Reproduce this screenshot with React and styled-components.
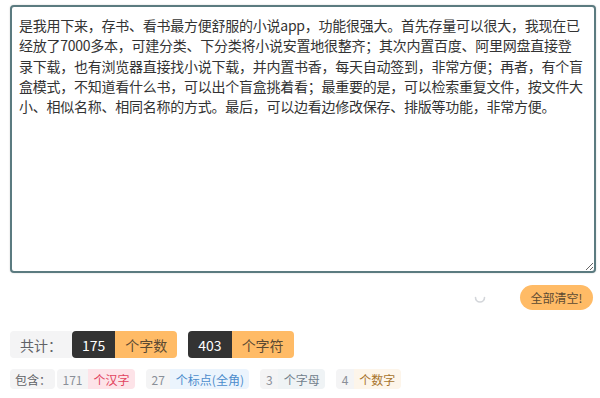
import React from 'react';
import styled, { createGlobalStyle } from 'styled-components';

const GlobalStyle = createGlobalStyle`
  html, body {
    margin: 0;
    padding: 0;
    background: #fff;
  }
  body {
    font-family: "Noto Sans CJK SC", "Noto Sans", sans-serif;
  }
`;

const Page = styled.div`
  width: 600px;
  padding: 5px 4px 0 10px;
  box-sizing: border-box;
`;

const Editor = styled.textarea`
  display: block;
  width: 100%;
  height: 268px;
  box-sizing: border-box;
  padding: 8px 9px 8px 7px;
  border: 2px solid #5b7b80;
  border-radius: 4px;
  box-shadow: 0 0 2px rgba(0, 0, 0, 0.18);
  font-family: "Noto Sans CJK SC", sans-serif;
  font-size: 14px;
  letter-spacing: -0.25px;
  line-height: 20.3px;
  color: #333;
  outline: none;
  resize: both;
`;

const Actions = styled.div`
  display: flex;
  justify-content: flex-end;
  align-items: center;
  margin-top: 12px;
  padding-right: 3px;
`;

const Spinner = styled.svg`
  width: 14px;
  height: 14px;
  margin-right: 33px;
`;

const ClearButton = styled.button`
  height: 25px;
  width: 73px;
  padding: 0;
  border: none;
  border-radius: 13px;
  background: #ffbb66;
  color: #5c4a32;
  font-family: "Noto Sans CJK SC", sans-serif;
  font-size: 12px;
  cursor: pointer;
`;

const TotalRow = styled.div`
  display: flex;
  align-items: center;
  gap: 11px;
  margin-top: 21px;
`;

const Group = styled.div`
  display: flex;
`;

const Pill = styled.span`
  display: inline-flex;
  align-items: center;
  height: ${(p) => (p.small ? '20px' : '27px')};
  padding: 0 ${(p) => (p.small ? '5.5px' : '10px')};
  font-size: ${(p) => (p.small ? '12px' : '14px')};
  background: ${(p) => p.bg};
  color: ${(p) => p.fg};
  border-radius: ${(p) =>
    p.side === 'left' ? '4px 0 0 4px' : p.side === 'right' ? '0 4px 4px 0' : '4px'};
  white-space: nowrap;
`;

const DetailRow = styled.div`
  display: flex;
  align-items: center;
  gap: 11px;
  margin-top: 11px;
`;

const Lead = styled(Pill)`
  padding: 0 4px 0 5px;
  margin-right: -9px;
`;

const TEXT =
  '是我用下来，存书、看书最方便舒服的小说app，功能很强大。首先存量可以很大，我现在已经放了7000多本，可建分类、下分类将小说安置地很整齐；其次内置百度、阿里网盘直接登录下载，也有浏览器直接找小说下载，并内置书香，每天自动签到，非常方便；再者，有个盲盒模式，不知道看什么书，可以出个盲盒挑着看；最重要的是，可以检索重复文件，按文件大小、相似名称、相同名称的方式。最后，可以边看边修改保存、排版等功能，非常方便。';

const details = [
  { num: 171, label: '个汉字', bg: '#fde3e8', fg: '#e2445f' },
  { num: 27, label: '个标点(全角)', bg: '#ebf4fd', fg: '#4b8ccc' },
  { num: 3, label: '个字母', bg: '#eff3f5', fg: '#72818c' },
  { num: 4, label: '个数字', bg: '#fdf5ea', fg: '#a8742c' },
];

export default function App() {
  return (
    <Page>
      <GlobalStyle />
      <Editor defaultValue={TEXT} spellCheck={false} />
      <Actions>
        <Spinner viewBox="0 0 14 14">
          <path
            d="M2.5 6.5 A4.5 4.5 0 0 0 11.5 6.5"
            fill="none"
            stroke="#d3d6da"
            strokeWidth="1.6"
            strokeLinecap="round"
          />
        </Spinner>
        <ClearButton>全部清空!</ClearButton>
      </Actions>
      <TotalRow>
        <Group>
          <Pill bg="#f4f4f5" fg="#606266" side="left">共计：</Pill>
          <Pill bg="#333" fg="#fff" side="left">175</Pill>
          <Pill bg="#ffbb66" fg="#5c4a32" side="right">个字数</Pill>
        </Group>
        <Group>
          <Pill bg="#333" fg="#fff" side="left">403</Pill>
          <Pill bg="#ffbb66" fg="#5c4a32" side="right">个字符</Pill>
        </Group>
      </TotalRow>
      <DetailRow>
        <Lead small bg="#f4f4f5" fg="#606266">包含：</Lead>
        {details.map((d) => (
          <Group key={d.label}>
            <Pill small bg="#f4f4f5" fg="#8a8f98" side="left">{d.num}</Pill>
            <Pill small bg={d.bg} fg={d.fg} side="right">{d.label}</Pill>
          </Group>
        ))}
      </DetailRow>
    </Page>
  );
}
